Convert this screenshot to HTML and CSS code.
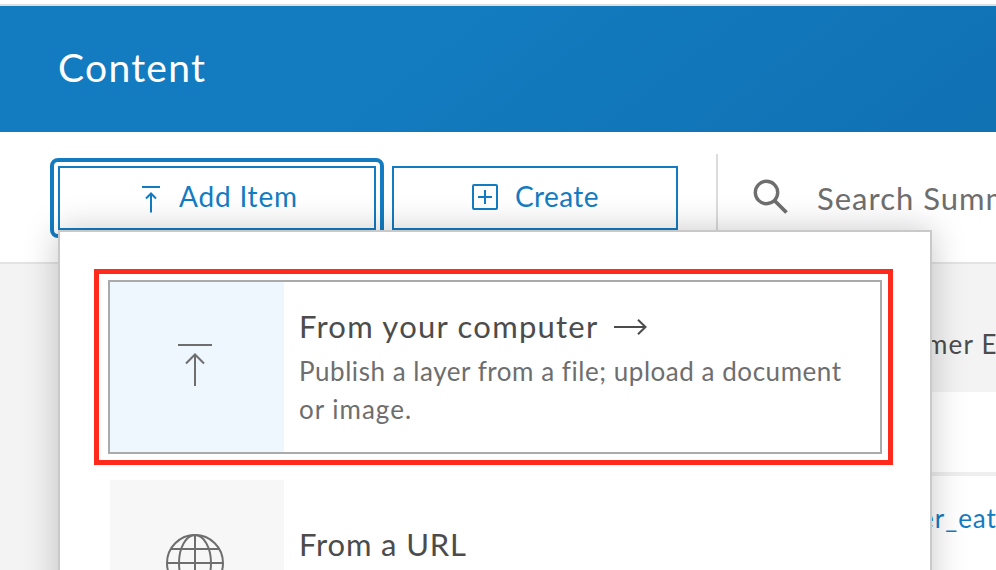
FILE: index.html
```
<!DOCTYPE html>
<html lang="en">
<head>
<meta charset="utf-8">
<title>Content</title>
<link rel="stylesheet" href="styles.css">
</head>
<body>
<header class="banner"><h1>Content</h1></header>
<div class="toolbar">
  <div class="action">
    <button class="btn btn-add">
      <svg width="18" height="28" viewBox="0 0 18 28" fill="none" stroke="currentColor" stroke-width="2"><path d="M0 1h18M9 26.500V8M4 12.500l5-5 5 5"/></svg>
      <span class="t-add">Add Item</span>
    </button>
    <div class="menu">
      <div class="highlight">
        <div class="option active">
          <div class="tile"><svg width="34" height="42" viewBox="0 0 34 42" fill="none" stroke="#6e6e6e" stroke-width="2"><path d="M0 1h34M17 42V11M8 19.500l9-9 9 9"/></svg></div>
          <div class="copy">
            <h2><span class="t-computer">From your computer</span><svg width="34" height="16" viewBox="0 0 34 16" fill="none" stroke="#4c4c4c" stroke-width="2"><path d="M0 8h32M24 .8 31.500 8 24 15.200"/></svg></h2>
            <p><span class="t-desc1">Publish a layer from a file; upload a document</span><br><span class="t-desc2">or image.</span></p>
          </div>
        </div>
      </div>
      <div class="option plain">
        <div class="tile"><svg width="58" height="58" viewBox="0 0 58 58" fill="none" stroke="#6e6e6e" stroke-width="2"><circle cx="29" cy="29" r="28"/><path d="M29 1v56M1 29h56M5 15h48M5 43h48"/><ellipse cx="29" cy="29" rx="16" ry="28"/></svg></div>
        <div class="copy"><h2><span class="t-url">From a URL</span></h2></div>
      </div>
    </div>
  </div>
  <button class="btn btn-create">
    <svg width="26" height="26" viewBox="0 0 26 26" fill="none" stroke="currentColor" stroke-width="2"><rect x="1" y="1" width="24" height="24" rx="1"/><path d="M6 13h14M13 6v14"/></svg>
    <span class="t-create">Create</span>
  </button>
  <div class="search">
    <svg width="36" height="36" viewBox="0 0 36 36" fill="none" stroke="#6e6e6e"><circle cx="13.500" cy="13.500" r="11.200" stroke-width="3.400"/><path d="M21.500 21.500 33.500 33.500" stroke-width="3.800"/></svg>
    <span class="t-search">Search Summ</span>
  </div>
</div>
<main class="body">
  <aside class="side"></aside>
  <section class="results">
    <div class="row-head"><span class="t-head">mer E</span></div>
    <div class="row-tools"></div>
    <div class="row-item"><span class="t-item">er_eat</span></div>
  </section>
</main>
</body>
</html>
```
FILE: styles.css
```
* { box-sizing: border-box; }
html { overflow: hidden; }
body { margin: 0; height: 570px; overflow: hidden; background: #fff; font-family: Lato, "Open Sans", sans-serif; border-top: 4px solid #fff; display: flex; flex-direction: column; }
h1, h2, p { margin: 0; font-weight: 400; }
svg { display: block; flex: none; }
span { white-space: nowrap; }
.banner { flex: none; height: 128px; border-top: 2px solid #dfdfdf; background: linear-gradient(142deg, #137cc1 35%, #1071b3 100%); color: #fff; padding: 36px 0 0 58px; }
.banner h1 { font-size: 39px; line-height: 50px; letter-spacing: 1.3px; }
.toolbar { flex: none; height: 132px; border-bottom: 2px solid #e3e3e3; padding: 34px 0 0 58px; display: flex; }
.action { position: relative; width: 318px; height: 64px; margin-right: 16px; }
.btn { height: 64px; border: 2px solid #137cc1; background: #fff; color: #137cc1; font: 28px/34px Lato, sans-serif; display: flex; align-items: center; justify-content: flex-start; padding: 0 0 5px; }
.btn-add { width: 318px; gap: 19px; padding-left: 82px; }
.btn-add::before { content: ""; position: absolute; inset: -8px; border: 4px solid #137cc1; border-radius: 8px; }
.btn-add svg { margin-top: 8px; }
.btn-create { width: 286px; gap: 17px; padding-left: 78px; }
.btn-create svg { margin-top: 3px; }
.t-add { letter-spacing: .8px; }
.t-create { letter-spacing: .4px; }
.menu { position: absolute; z-index: 5; left: 0; top: 64px; width: 874px; height: 420px; background: #fff; border: 2px solid #c9c9c9; box-shadow: 0 0 32px rgba(0,0,0,.22); padding: 37px 0 0 34px; }
.highlight { width: 799px; height: 196px; border: 5px solid #ff291c; padding: 6px 0 0 9px; }
.option { display: flex; width: 774px; height: 174px; border: 2px solid transparent; }
.active { border-color: #aaa; }
.tile { width: 174px; background: #eef6fe; display: flex; justify-content: center; padding-top: 62px; padding-right: 4px; }
.plain { margin: 13px 0 0 14px; }
.plain .tile { background: #f7f7f7; padding-top: 54px; }
.copy { padding: 22px 0 0 15px; color: #4c4c4c; }
.copy h2 { display: flex; align-items: center; gap: 15px; font-size: 31px; line-height: 44px; }
.copy h2 svg { margin-top: 2px; }
.plain .copy { padding-top: 42px; }
.copy p { color: #6e6e6e; font-size: 26px; line-height: 38px; margin-top: 4px; }
.t-computer { letter-spacing: 1.25px; }
.t-url { letter-spacing: .85px; }
.t-desc1 { letter-spacing: .54px; }
.t-desc2 { letter-spacing: 1px; }
.search { flex: 1; min-width: 0; margin: -12px 0 0 38px; border-left: 2px solid #dcdcdc; height: 88px; display: flex; padding: 24px 0 0 35px; gap: 28px; overflow: hidden; color: #6e6e6e; font-size: 31px; line-height: 40px; }
.t-search { letter-spacing: 1px; }
.search svg { margin-top: 1px; }
.body { flex: 1; display: flex; min-height: 0; }
.side { width: 60px; background: #f3f3f3; }
.results { flex: 1; min-width: 0; overflow: hidden; }
.row-head { height: 128px; background: #f3f3f3; padding: 61px 0 0 866px; font-size: 26px; line-height: 38px; color: #4c4c4c; }
.t-head { letter-spacing: 1.2px; }
.row-tools { height: 84px; border-bottom: 4px solid #eee; }
.row-item { padding: 23px 0 0 860px; font-size: 26px; line-height: 38px; color: #137cc1; }
.t-item { letter-spacing: 1px; }
```
